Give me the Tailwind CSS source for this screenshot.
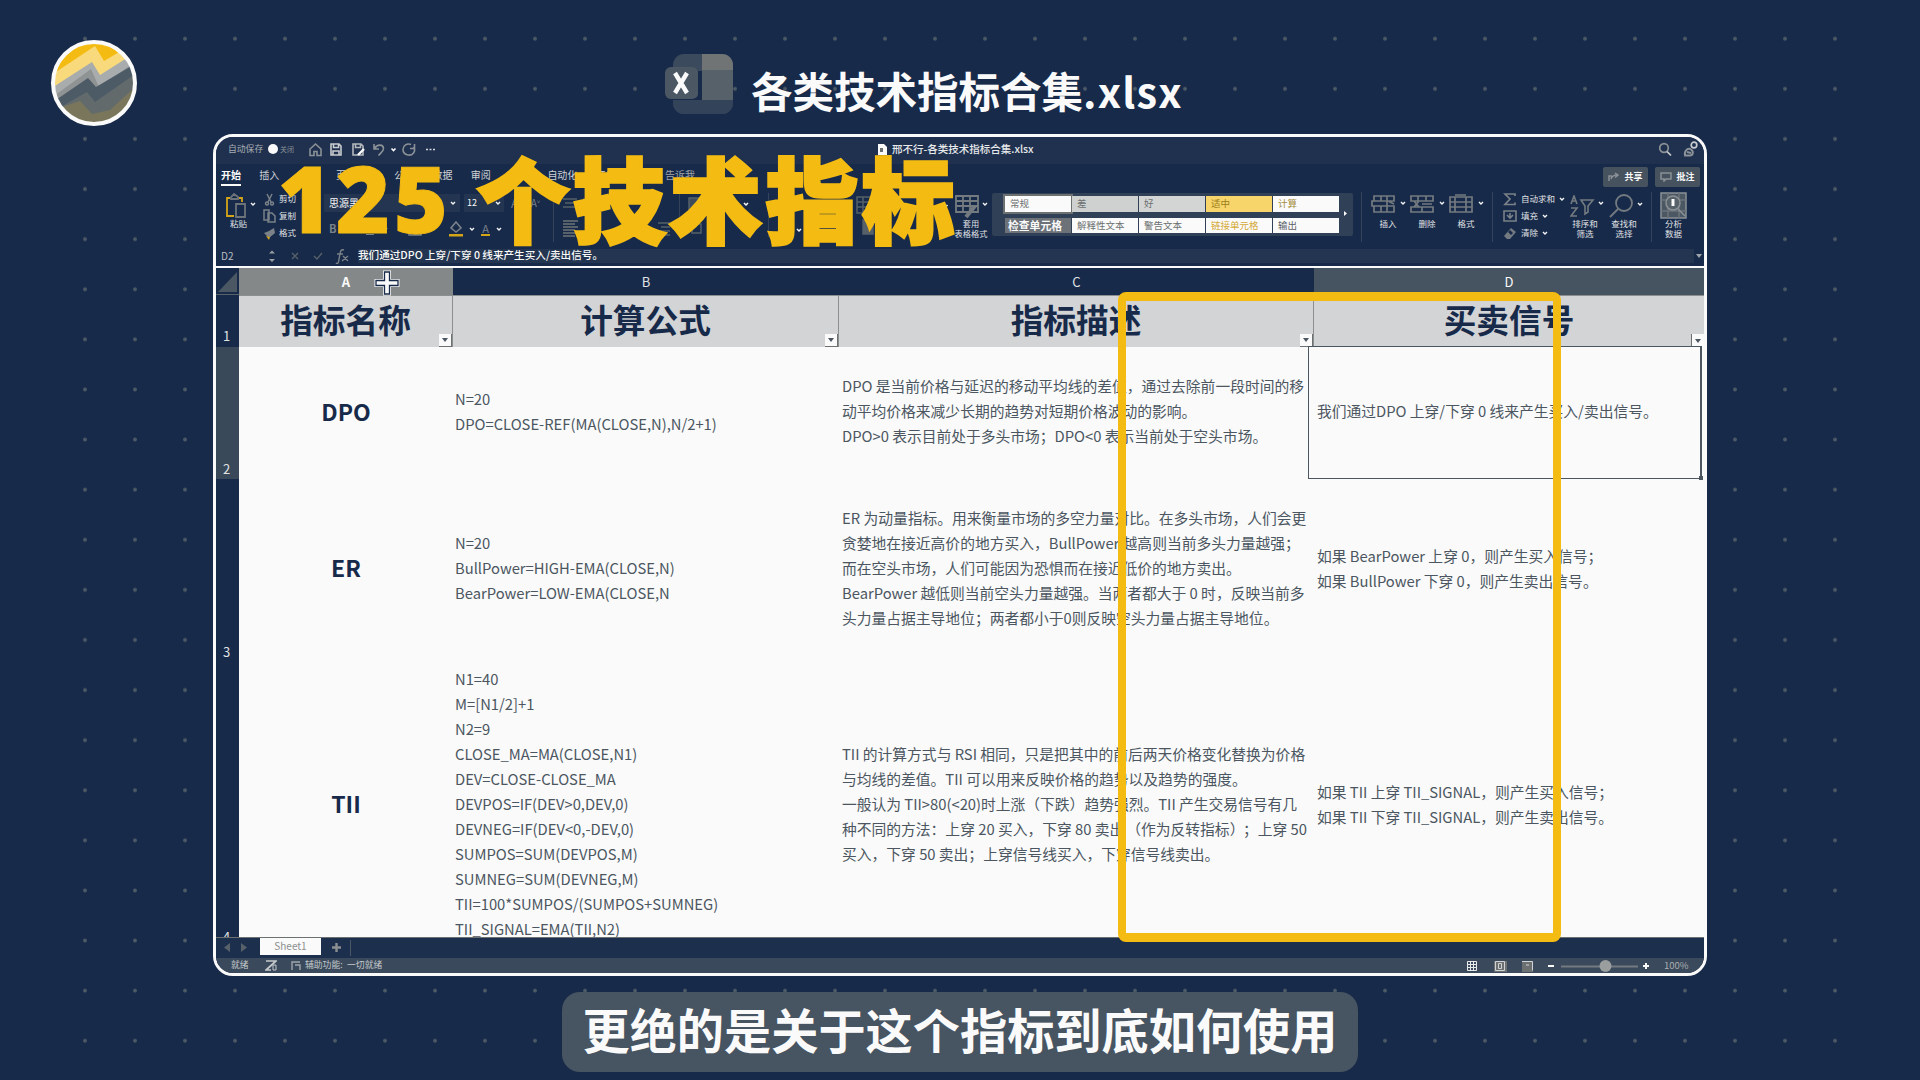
<!DOCTYPE html>
<html lang="zh-CN">
<head>
<meta charset="utf-8">
<title>各类技术指标合集.xlsx</title>
<script src="https://cdn.jsdelivr.net/npm/@tailwindcss/browser@4"></script>
</head>
<body class="bg-[#172a4a]">
<svg width="0" height="0" class="absolute">
  <defs>
    <symbol id="chev" viewBox="0 0 6 6"><path d="M1 2l2 2 2-2" fill="none" stroke="#f4f5f6" stroke-width="1.4"/></symbol>
    <pattern id="dots" x="60" y="13.7" width="50" height="50.1" patternUnits="userSpaceOnUse"><circle cx="25" cy="25" r="1.9" fill="#4d5a66"/></pattern>
  </defs>
</svg>
<main class="relative flex h-[1080px] w-[1920px] flex-col items-center overflow-hidden bg-[#172a4a] font-['Noto_Sans_CJK_SC',sans-serif] text-[#fafafa]">
  <svg class="absolute inset-0" width="1920" height="1080"><rect x="60" y="34" width="1800" height="1020" fill="url(#dots)"/></svg>

  <!-- channel logo -->
  <svg class="absolute left-[50px] top-[39px]" width="88" height="88" viewBox="0 0 88 88">
    <defs><clipPath id="disc"><circle cx="44" cy="44" r="40"/></clipPath></defs>
    <g clip-path="url(#disc)">
      <rect width="88" height="88" fill="#f4bb12"/>
      <path d="M0 37L45 7l9 15 34-20v86H0z" fill="#f8da7c"/>
      <path d="M0 50L42 23l8 13 38-24v76H0z" fill="#a9acac"/>
      <path d="M0 60L41 30l8 18 39-27v67H0z" fill="#8f9394"/>
      <path d="M0 65L38 39l8 9 42-25v65H0z" fill="#4d5b66"/>
      <path d="M0 74L37 53l8 10 43-30v55H0z" fill="#626a6c"/>
      <path d="M12 88V68l18-6 12 13 18-4 24-22v39z" fill="#8a7e50" opacity=".6"/>
    </g>
    <circle cx="44" cy="44" r="41" fill="none" stroke="#fafafa" stroke-width="4"/>
  </svg>

  <!-- file title -->
  <header class="relative flex h-[134px] w-full shrink-0 pl-[665px] pt-[54px]">
    <svg class="shrink-0" width="68" height="60" viewBox="0 0 68 60">
      <rect x="8" y="0" width="60" height="60" rx="11" fill="#3b4a5c"/>
      <path d="M37 0h20a11 11 0 0 1 11 11v5H37z" fill="#707475"/>
      <path d="M37 16h31v30H37z" fill="#566169"/>
      <path d="M8 46h60v3a11 11 0 0 1-11 11H19A11 11 0 0 1 8 49z" fill="#33435a"/>
      <path d="M33 17h4v29H8v-2h21a4 4 0 0 0 4-4z" fill="#172a4a"/>
      <rect x="0" y="13" width="33" height="32" rx="6" fill="#4b5864"/>
      <path d="M10 19l12 20M22 19L10 39" stroke="#fafafa" stroke-width="4.4"/>
    </svg>
    <h1 class="ml-[18px] mt-[6px] whitespace-nowrap text-[41.5px] font-bold leading-[60px]">各类技术指标合集<span class="tracking-[1.200px]">.xlsx</span></h1>
  </header>

  <!-- spreadsheet window -->
  <section class="relative flex h-[842px] w-[1494px] shrink-0 flex-col overflow-hidden rounded-[20px] border-[3px] border-[#fafafa] bg-[#172a4a]">
    <!-- title bar -->
    <div class="flex h-[27px] shrink-0 items-center bg-[#1f314f] pb-[3px] pl-[12px] text-[8.800px] leading-none text-[#a9adb2]">
      <span class="w-[40px] whitespace-nowrap">自动保存</span>
      <span class="flex h-[11px] w-[28px] items-center rounded-full"><i class="size-[10px] rounded-full bg-[#fafafa]"></i><b class="ml-[2px] whitespace-nowrap text-[7px] font-normal text-[#8b9196]">关闭</b></span>
      <svg class="ml-[10px]" width="140" height="18" viewBox="306 140 140 18" fill="none" stroke="#8b9196" stroke-width="1.6">
        <path d="M310 149l5.500-5 5.500 5v6.500h-4v-4h-3v4h-4z"/>
        <path d="M331 144h8l2 2v9h-10zM333.500 144v3.500h5V144M333 155v-4h6v4" stroke="#c9cccf"/>
        <path d="M353 144h8l2 2v9h-10zM355.500 144v3.500h5V144" stroke="#b4b8bc"/><path d="M358 155l6-6" stroke="#fafafa" stroke-width="2.400"/>
        <path d="M374 144v5h5M374.500 148.500c3-5 9-4 9 0 0 3-3 4.500-5 7"/>
        <path d="M391.500 148.500l2 2 2-2" stroke="#fafafa"/>
        <path d="M411 144.500c-4-1.500-8 1-8 5 0 5.500 7.500 7.500 10.500 3.500 1.500-2 1.500-4 0-6M410 148.500h4.500V144"/>
        <path d="M426 149.500h2m1.500 0h2m1.500 0h2" stroke="#d5d8da"/>
      </svg>
      <svg class="ml-[431px]" width="11" height="13" viewBox="0 0 11 13"><path d="M1 1h6l3 3v8H1z" fill="#fafafa"/><path d="M3 5h3v4H3z" fill="#6c7070"/></svg>
      <span class="ml-[4px] w-[150px] whitespace-nowrap text-[10.500px] font-medium text-[#e8eaec]">邢不行-各类技术指标合集.xlsx</span>
      <svg class="ml-auto mr-[5px]" width="42" height="18" viewBox="0 0 42 18" fill="none" stroke="#8b9196" stroke-width="1.700"><circle cx="7" cy="8" r="4.300"/><path d="M10 11.500l4 4" stroke="#c9cccf"/><circle cx="37" cy="5" r="2.800" stroke="#c9cccf"/><path d="M28 15.500c-1-5 3-8 6-6s2 6-1 6zM30 12l4 1" stroke-width="2"/></svg>
    </div>

    <!-- menu tabs -->
    <div class="flex h-[25px] shrink-0 items-center justify-between pl-[5px] pr-[4px] text-[10px] leading-none">
      <nav class="flex gap-[18.300px] whitespace-nowrap pb-[4px] text-[#d0d3d6]">
        <span class="relative font-bold text-[#fafafa]">开始<i class="absolute -bottom-[6px] left-0 h-[2px] w-full bg-[#fafafa]"></i></span>
        <span>插入</span><span>绘图</span><span>页面布局</span><span>公式</span><span>数据</span><span>审阅</span><span>视图</span><span>自动化</span><span>开发工具</span><span class="pl-[11px] text-[#a0a5aa]">告诉我</span>
      </nav>
      <div class="flex gap-[7px] text-[9px] font-bold">
        <span class="flex h-[20px] w-[45px] items-center justify-center gap-[4px] rounded-[2px] bg-[#46535f]"><svg width="12" height="10" viewBox="0 0 12 10" fill="none" stroke="#8b9196" stroke-width="1.500"><path d="M1 9V4h3M3 7c1-3 3-4 6-4M7 1l3 2-3 2.500"/></svg>共享</span>
        <span class="flex h-[20px] w-[45px] items-center justify-center gap-[4px] rounded-[2px] bg-[#46535f]"><svg width="12" height="10" viewBox="0 0 12 10" fill="none" stroke="#8b9196" stroke-width="1.500"><path d="M1 1h10v6H6L4 9V7H1z"/></svg>批注</span>
      </div>
    </div>

    <!-- ribbon -->
    <div class="flex h-[56px] shrink-0 text-[8.500px] leading-[9.500px] text-[#e0e2e5]">
      <div class="flex w-[43px] flex-col pl-[8px]">
        <div class="flex items-center gap-[2px]"><svg class="mt-[4px]" width="24" height="26" viewBox="0 0 24 26" fill="none" stroke-width="1.800"><path d="M6 5H3v18h7M15 5h3v4" stroke="#d4a517"/><path d="M7 6V4l3-3 4 3v2z" stroke="#6c7379"/><path d="M12 11h9v13h-9z" stroke="#6c7379"/></svg><svg width="6" height="6"><use href="#chev"/></svg></div>
        <span class="ml-[6px]">粘贴</span>
      </div>
      <div class="flex w-[60px] flex-col gap-[1px] pl-[4px] pt-[2px] [&>div]:flex [&>div]:h-[16px] [&>div]:items-center [&>div]:gap-[3px] [&>div]:whitespace-nowrap">
        <div><svg width="13" height="13" viewBox="0 0 13 13" fill="none" stroke="#7a8188" stroke-width="1.500"><path d="M4 1l4 8M9 1L5 9"/><circle cx="4" cy="10.500" r="1.500"/><circle cx="9" cy="10.500" r="1.500"/></svg>剪切</div>
        <div><svg width="13" height="14" viewBox="0 0 13 14" fill="none" stroke="#7a8188" stroke-width="1.500"><path d="M1 1h5v10H1zM5 4h4l3 3v6H5z"/></svg>复制</div>
        <div><svg width="13" height="13" viewBox="0 0 13 13"><path d="M6 4l5-3 1 5-6 5-5-5z" fill="#7a8188"/><path d="M3 9l4 1-1 3z" fill="#d4a517"/></svg>格式</div>
      </div>
      <div class="flex w-[234px] flex-col gap-[7px] pl-[5px] pt-[5px]">
        <div class="flex h-[18px] items-center">
          <span class="flex h-full w-[136px] items-center justify-between bg-[#233550] pl-[5px] pr-[4px] text-[10px] text-[#fafafa]">思源黑体<svg width="6" height="6"><use href="#chev"/></svg></span>
          <span class="ml-[4px] flex h-full w-[40px] items-center justify-between bg-[#233550] px-[3px] text-[9px] text-[#fafafa]">12<svg width="6" height="6"><use href="#chev"/></svg></span>
          <span class="ml-[7px] text-[12px] text-[#7a8188]">A<sup class="text-[6px]">^</sup></span><span class="ml-[9px] text-[10px] text-[#7a8188]">A<sup class="text-[6px]">˅</sup></span>
        </div>
        <div class="flex h-[20px] items-center text-[11px] text-[#7a8188]">
          <b class="w-[24px] pl-[5px]">B</b><i class="w-[18px]">I</i><u class="w-[16px]">U</u><svg width="6" height="6"><use href="#chev"/></svg>
          <svg class="ml-[20px]" width="14" height="14" viewBox="0 0 14 14" fill="none" stroke="#7a8188" stroke-width="1.500"><path d="M1 1h12v12H1zM7 1v12M1 7h12"/></svg><svg class="ml-[3px]" width="6" height="6"><use href="#chev"/></svg>
          <span class="ml-auto mr-[51px] flex items-center gap-[6px]"><svg width="14" height="16" viewBox="0 0 14 16"><path d="M7 1l5 6-5 4-5-4z" fill="none" stroke="#7a8188" stroke-width="1.600"/><path d="M0 13h14v2.500H0z" fill="#d4a517"/></svg><svg width="6" height="6"><use href="#chev"/></svg><span class="border-b-2 border-[#d4a517] px-[1px] leading-[12px]">A</span><svg width="6" height="6"><use href="#chev"/></svg></span>
        </div>
      </div>
      <div class="my-[3px] w-px bg-[#33435a]"></div>
      <!-- alignment, number and conditional-format controls -->
      <svg class="shrink-0" width="401" height="56" viewBox="554 188 401 56" fill="none" stroke="#566169" stroke-width="1.500">
        <path d="M563 198h14m-12 4h10m-12 4h14M583 198h14m-12 4h10m-12 4h14"/><path d="M563 220h15m-15 3h12m-12 3h15m-15 3h12m-12 3h15m-15 3h12" stroke-width="2"/><path d="M658 222h12m-9 4h9m-12 4h12M660 234h10"/>
        <path d="M679.500 192v44" stroke="#33435a" stroke-width="1"/><rect x="689" y="197" width="18" height="13" fill="#3d4c5c"/><rect x="692" y="223" width="9" height="9"/><path d="M768.500 192v44" stroke="#33435a" stroke-width="1"/>
        <rect x="857" y="196" width="16" height="16"/><path d="M857 201h16m-16 5h16m-10-10v16"/><rect x="863" y="219" width="10" height="14" fill="#566169"/>
        <path d="M744 202l2 2 2-2M797 228l2 2 2-2M943.500 204l2 2 2-2" stroke="#fafafa"/>
      </svg>
      <div class="flex w-[37px] flex-col items-start">
        <div class="flex items-center gap-[3px]"><svg class="mt-[6px]" width="24" height="24" viewBox="0 0 24 24" fill="none" stroke="#747b80" stroke-width="1.800"><path d="M1 1h22v16H1zM1 6h22M1 11h22M8 1v16M15 1v16"/><path d="M20 11l-9 11" stroke-width="4"/></svg><svg width="6" height="6"><use href="#chev"/></svg></div>
        <span class="-ml-[2px] w-[36px] text-center text-[8.200px] leading-[9.500px]">套用<br>表格格式</span>
      </div>
      <div class="relative mt-[4px] grid h-[43px] w-[361px] shrink-0 grid-cols-[repeat(5,65.500px)] grid-rows-2 gap-x-[1.500px] gap-y-[6px] rounded-[2px] bg-[#2f4057] py-[3px] pl-[13px] text-[9.500px] leading-[14px] text-[#6c7070] [&>span]:overflow-hidden [&>span]:whitespace-nowrap [&>span]:bg-[#fafafa] [&>span]:pl-[5px]">
        <span class="outline-2 outline-[#6c7070]">常规</span><span class="!bg-[#cfd1d1]">差</span><span class="!bg-[#d3d5d5]">好</span><span class="!bg-[#f7d56b] text-[#9c7d1a]">适中</span><span class="text-[#a58c3a]">计算</span>
        <span class="!bg-[#6c7278] !pl-[3px] font-bold !text-[#fafafa] text-[10.800px]">检查单元格</span><span>解释性文本</span><span>警告文本</span><span class="text-[#d4a935]">链接单元格</span><span class="text-[#5a6066]">输出</span>
        <svg class="absolute right-[5px] top-[18px]" width="5" height="5"><path d="M1 0l3 2.500-3 2.500z" fill="#fafafa"/></svg>
      </div>
      <div class="my-[3px] ml-[8px] w-px bg-[#33435a]"></div>
      <div class="flex pl-[9px] [&>div]:w-[39px]">
        <div><div class="flex items-center gap-[3px]"><svg class="mt-[5px]" width="26" height="22" viewBox="0 0 26 22" fill="none" stroke="#747b80" stroke-width="1.700"><path d="M3 2h20v5H3zM1 7h15v5H1zM3 12h20v6H3zM10 2v5m6-5v5M10 12v6m6-6v6M17 7l6 3"/></svg><svg width="6" height="6"><use href="#chev"/></svg></div><p class="mt-[3px] w-[34px] text-center">插入</p></div>
        <div><div class="flex items-center gap-[3px]"><svg class="mt-[5px]" width="26" height="22" viewBox="0 0 26 22" fill="none" stroke="#747b80" stroke-width="1.700"><path d="M1 2h22v5H1zM1 13h22v5H1zM4 7l5 6m0-6l-5 6M12 10h10M8 2v5m8-5v5M12 13v5"/></svg><svg width="6" height="6"><use href="#chev"/></svg></div><p class="mt-[3px] w-[34px] text-center">删除</p></div>
        <div><div class="flex items-center gap-[3px]"><svg class="mt-[5px]" width="26" height="22" viewBox="0 0 26 22" fill="none" stroke="#747b80" stroke-width="1.700"><path d="M1 3h22v15H1zM6 3v15M17 3v15M1 8h22M1 13h22M6 1h11"/></svg><svg width="6" height="6"><use href="#chev"/></svg></div><p class="mt-[3px] w-[34px] text-center">格式</p></div>
      </div>
      <div class="my-[3px] ml-[4px] w-px bg-[#33435a]"></div>
      <div class="flex w-[77px] flex-col gap-[1px] pl-[10px] pt-[2px] [&>div]:flex [&>div]:h-[16px] [&>div]:items-center [&>div]:gap-[4px] [&>div]:whitespace-nowrap">
        <div><svg width="14" height="13" viewBox="0 0 14 13" fill="none" stroke="#7a8188" stroke-width="1.700"><path d="M12 3V1H2l5 5-5 5.500h10v-2"/></svg>自动求和<svg width="6" height="6"><use href="#chev"/></svg></div>
        <div><svg width="14" height="12" viewBox="0 0 14 12" fill="none" stroke="#7a8188" stroke-width="1.600"><path d="M1 1h12v10H1zM4 5l3 3 3-3M7 3v5"/></svg>填充<svg width="6" height="6"><use href="#chev"/></svg></div>
        <div><svg width="14" height="13" viewBox="0 0 14 13"><path d="M8 1l5 4-6 7H4L1 9z" fill="#747b80"/><path d="M7 3l3 3-2 2-3-3z" fill="#172a4a"/></svg>清除<svg width="6" height="6"><use href="#chev"/></svg></div>
      </div>
      <div class="flex [&>div]:w-[39px]">
        <div><div class="flex items-center gap-[2px]"><svg class="mt-[6px]" width="26" height="22" viewBox="0 0 26 22" fill="none" stroke="#747b80" stroke-width="1.600"><path d="M1 9l3-8 3 8M2 6h4M1 13h6l-6 8h6M11 5h12l-5 6v6l-3 2v-8z"/></svg><svg width="6" height="6"><use href="#chev"/></svg></div><p class="mt-[2px] w-[30px] text-center">排序和筛选</p></div>
        <div><div class="flex items-center gap-[2px]"><svg class="mt-[5px]" width="26" height="24" viewBox="0 0 26 24" fill="none" stroke="#747b80" stroke-width="1.800"><circle cx="15" cy="9" r="8"/><path d="M9 15l-8 8"/></svg><svg width="6" height="6"><use href="#chev"/></svg></div><p class="mt-[1px] w-[30px] text-center">查找和选择</p></div>
      </div>
      <div class="my-[3px] ml-[3px] w-px bg-[#33435a]"></div>
      <div class="flex flex-col items-center pl-[8px] pt-[3px]">
        <svg width="27" height="27" viewBox="0 0 27 27" fill="none" stroke="#8b9196" stroke-width="1.500"><rect x="1" y="1" width="25" height="25" fill="#4b5864"/><path d="M1 8h25M1 19h25M8 1v25M19 1v25" stroke="#6c7379"/><circle cx="13" cy="11" r="7" fill="#566169"/><path d="M13 7v7" stroke="#fafafa" stroke-width="3"/><path d="M18 17l7 7"/></svg>
        <p class="w-[20px] text-center">分析数据</p>
      </div>
    </div>

    <!-- formula bar -->
    <div class="flex h-[22px] shrink-0 items-center pb-[1px] pl-[5px] text-[10.600px] leading-none">
      <span class="w-[46px] text-[10px] text-[#b9bdc1]">D2</span>
      <svg width="90" height="16" viewBox="267 248 90 16" fill="none" stroke="#7a8188" stroke-width="1.400"><path d="M269 253.500l3-3 3 3zM269 259l3 3 3-3z" fill="#9a9fa3" stroke="none"/><path d="M292 253l6 6m0-6l-6 6M314 256l3 3 5-6" stroke="#566169"/><path d="M344 250c-3-1-3.500 1-4 4l-1.500 8c-.5 1.500-1.500 2-2.500 1M337 254h6M343 256l5 5m0-5l-6 5"/></svg>
      <span class="ml-[1px] flex h-[14px] w-[1336px] items-center whitespace-nowrap bg-[#233550] font-medium">我们通过DPO 上穿/下穿 0 线来产生买入/卖出信号。</span>
      <svg class="ml-[2px]" width="6" height="6"><path d="M0 1h6L3 5z" fill="#a0a5aa"/></svg>
    </div>
    <div class="-mt-px h-[2px] shrink-0 bg-[#fafafa]"></div>

    <!-- sheet -->
    <div class="grid h-[669px] shrink-0 grid-cols-[23px_214px_386px_475px_390px] grid-rows-[27px_52px_132px_182px_276px] overflow-hidden bg-[#fafafa] text-[14.780px] leading-[25px] text-[#4b5661]">
      <div class="flex items-end justify-end border-b border-[#566169] bg-[#172a4a] p-[2px]"><svg width="19" height="20"><path d="M19 0v20H0z" fill="#4b5864"/></svg></div>
      <div class="flex items-center justify-center bg-[#848889] pb-[1px] text-[13px] font-bold text-[#fafafa]">A</div>
      <div class="flex items-center justify-center bg-[#172a4a] pb-[1px] text-[13px] text-[#e0e2e4]">B</div>
      <div class="flex items-center justify-center bg-[#172a4a] pb-[1px] text-[13px] text-[#e0e2e4]">C</div>
      <div class="flex items-center justify-center bg-[#465361] pb-[1px] text-[13px] text-[#fafafa]">D</div>

      <div class="flex items-end justify-center bg-[#172a4a] pr-[2px] text-[13px] leading-[23px] text-[#e0e2e4]">1</div>
      <div class="relative flex items-center justify-center border-r border-t border-[#8b8f90] bg-[#d3d4d5] pb-[7px] text-[32.700px] font-bold text-[#172a4a]">指标名称<i class="absolute bottom-0 right-0 flex size-[13px] items-center justify-center border-b border-r border-[#6c7070] bg-[#fafafa]"><svg width="6" height="4"><path d="M0 0h6L3 4z" fill="#4b5661"/></svg></i></div>
      <div class="relative flex items-center justify-center border-r border-t border-[#8b8f90] bg-[#d3d4d5] pb-[7px] text-[32.700px] font-bold text-[#172a4a]">计算公式<i class="absolute bottom-0 right-0 flex size-[13px] items-center justify-center border-b border-r border-[#6c7070] bg-[#fafafa]"><svg width="6" height="4"><path d="M0 0h6L3 4z" fill="#4b5661"/></svg></i></div>
      <div class="relative flex items-center justify-center border-r border-t border-[#8b8f90] bg-[#d3d4d5] pb-[7px] text-[32.700px] font-bold text-[#172a4a]">指标描述<i class="absolute bottom-0 right-0 flex size-[13px] items-center justify-center border-b border-r border-[#6c7070] bg-[#fafafa]"><svg width="6" height="4"><path d="M0 0h6L3 4z" fill="#4b5661"/></svg></i></div>
      <div class="relative flex items-center justify-center border-t border-[#8b8f90] bg-[#d3d4d5] pb-[7px] text-[32.700px] font-bold text-[#172a4a]">买卖信号<i class="absolute bottom-0 right-0 flex size-[13px] items-center justify-center border-l border-[#6c7070] bg-[#fafafa]"><svg width="6" height="4"><path d="M0 0h6L3 4z" fill="#4b5661"/></svg></i></div>

      <div class="flex items-end justify-center bg-[#3a4959] pr-[2px] text-[13px] leading-[20px] text-[#e0e2e4]">2</div>
      <div class="flex items-center justify-center pb-[4px] text-[23px] font-bold text-[#172a4a]">DPO</div>
      <div class="flex items-center pb-[4px] pl-[2px]"><p>N=20<br>DPO=CLOSE-REF(MA(CLOSE,N),N/2+1)</p></div>
      <div class="flex items-center whitespace-nowrap pb-[5px] pl-[3px]"><p>DPO 是当前价格与延迟的移动平均线的差值，通过去除前一段时间的移<br>动平均价格来减少长期的趋势对短期价格波动的影响。<br>DPO&gt;0 表示目前处于多头市场；DPO&lt;0 表示当前处于空头市场。</p></div>
      <div class="flex items-center whitespace-nowrap pb-[5px] pl-[3px]"><p>我们通过DPO 上穿/下穿 0 线来产生买入/卖出信号。</p></div>

      <div class="flex items-end justify-center bg-[#172a4a] pr-[2px] text-[13px] leading-[18px] text-[#e0e2e4]">3</div>
      <div class="flex items-center justify-center pb-[5px] text-[23px] font-bold text-[#172a4a]">ER</div>
      <div class="flex items-center pb-[5px] pl-[2px]"><p>N=20<br>BullPower=HIGH-EMA(CLOSE,N)<br>BearPower=LOW-EMA(CLOSE,N</p></div>
      <div class="flex items-center whitespace-nowrap pb-[5px] pl-[3px]"><p>ER 为动量指标。用来衡量市场的多空力量对比。在多头市场，人们会更<br>贪婪地在接近高价的地方买入，BullPower 越高则当前多头力量越强；<br>而在空头市场，人们可能因为恐惧而在接近低价的地方卖出。<br>BearPower 越低则当前空头力量越强。当两者都大于 0 时，反映当前多<br>头力量占据主导地位；两者都小于0则反映空头力量占据主导地位。</p></div>
      <div class="flex items-center whitespace-nowrap pb-[5px] pl-[3px]"><p>如果 BearPower 上穿 0，则产生买入信号；<br>如果 BullPower 下穿 0，则产生卖出信号。</p></div>

      <div class="flex items-end justify-center bg-[#172a4a] pr-[2px] text-[13px] leading-[0px] text-[#e0e2e4]">4</div>
      <div class="flex h-[285px] items-center justify-center text-[23px] font-bold text-[#172a4a]">TII</div>
      <div class="flex h-[285px] items-center pl-[2px]"><p>N1=40<br>M=[N1/2]+1<br>N2=9<br>CLOSE_MA=MA(CLOSE,N1)<br>DEV=CLOSE-CLOSE_MA<br>DEVPOS=IF(DEV&gt;0,DEV,0)<br>DEVNEG=IF(DEV&lt;0,-DEV,0)<br>SUMPOS=SUM(DEVPOS,M)<br>SUMNEG=SUM(DEVNEG,M)<br>TII=100*SUMPOS/(SUMPOS+SUMNEG)<br>TII_SIGNAL=EMA(TII,N2)</p></div>
      <div class="flex h-[285px] items-center whitespace-nowrap pl-[3px]"><p>TII 的计算方式与 RSI 相同，只是把其中的前后两天价格变化替换为价格<br>与均线的差值。TII 可以用来反映价格的趋势以及趋势的强度。<br>一般认为 TII&gt;80(&lt;20)时上涨（下跌）趋势强烈。TII 产生交易信号有几<br>种不同的方法：上穿 20 买入，下穿 80 卖出<span class="pl-[2px]">（作为反转指标）</span><span class="pl-[6px]">；上穿 50</span><br>买入，下穿 50 卖出；上穿信号线买入，下穿信号线卖出。</p></div>
      <div class="flex h-[285px] items-center whitespace-nowrap pl-[3px]"><p>如果 TII 上穿 TII_SIGNAL，则产生买入信号；<br>如果 TII 下穿 TII_SIGNAL，则产生卖出信号。</p></div>
    </div>

    <!-- sheet tabs -->
    <div class="flex h-[21px] shrink-0 border-t border-[#6c7070] bg-[#1c2f4d] text-[9px] leading-[15px]">
      <svg width="44" height="20" viewBox="216 937 44 20" fill="#566169"><path d="M230 942v9l-6-4.500zM241 942v9l6-4.500z"/></svg>
      <span class="h-[17px] w-[61px] bg-[#fafafa] text-center text-[10px] text-[#8b8f90]">Sheet1</span>
      <svg width="30" height="20" viewBox="0 0 30 20"><path d="M11 9.500h9M15.500 5v9" stroke="#8b8f90" stroke-width="2.400"/><path d="M29.500 2v16" stroke="#4b5864"/></svg>
    </div>
    <!-- status bar -->
    <div class="flex flex-1 items-center bg-[#3a495b] pl-[15px] text-[8.800px] leading-none text-[#c5c9cc]">
      <span class="w-[34px]">就绪</span>
      <svg width="12" height="11" viewBox="0 0 12 11" fill="none" stroke="#c5c9cc" stroke-width="1.700"><path d="M1 1h10L6 5.500 1 10h5"/><path d="M8 5h3v5H8z" stroke-width="1"/></svg>
      <svg class="ml-[13px]" width="12" height="11" viewBox="0 0 12 11" fill="none" stroke="#a0a5aa" stroke-width="1.400"><path d="M2 10V2h8M5 5h5v5"/></svg>
      <span class="ml-[3px] whitespace-nowrap">辅助功能:&ensp;一切就绪</span>
      <svg class="ml-auto" width="228" height="14" viewBox="1460 959 228 14" fill="none" stroke="#e8eaec" stroke-width="1">
        <path d="M1467.500 961.500h9v9h-9zM1470.500 961.500v9m3-9v9M1467.500 964.500h9m-9 3h9"/>
        <rect x="1494" y="961" width="13" height="11" fill="#6c7070" stroke="none"/><path d="M1495.500 961.500h9v9h-9zM1498.500 963.500h3v5h-3z" stroke="#d0d3d5"/>
        <rect x="1522" y="961" width="11" height="11" fill="#6c7070" stroke="none"/><path d="M1522 961.500h10.500v9M1526 965h3" stroke="#d0d3d5"/>
        <path d="M1548 966h6M1643 966h6M1646 963v6" stroke="#fafafa" stroke-width="2"/>
        <path d="M1561 966.500h77" stroke="#747b80" stroke-width="2"/><circle cx="1605.500" cy="966" r="6" fill="#9a9e9f" stroke="none"/>
      </svg>
      <span class="-ml-[24px] w-[40px] text-[9.500px] text-[#a9adb0]">100%</span>
    </div>

    <!-- active cell outline -->
    <div class="absolute left-[1092px] top-[209px] h-[133px] w-[394px] border border-r-2 border-[#4b5661]"><i class="absolute -bottom-[2px] -right-[3px] size-[4px] bg-[#4b5661]"></i></div>
  </section>

  <!-- subtitle -->
  <p class="relative mt-[16px] flex h-[80px] w-[796px] shrink-0 items-center justify-center whitespace-nowrap rounded-[18px] bg-[#475461] pb-[7px] text-[47.200px] font-bold leading-none">更绝的是关于这个指标到底如何使用</p>

  <!-- headline over the ribbon -->
  <p class="absolute left-[278px] top-[148px] flex items-baseline whitespace-nowrap text-[92px] font-black leading-[96px] text-[#f4bb12]"><span class="relative -top-[3px] w-[199px] font-['Open_Sans',sans-serif] text-[92px] font-extrabold leading-[90px] tracking-[4px] [-webkit-text-stroke:1px_#f4bb12]">125</span><span class="tracking-[4.300px] [-webkit-text-stroke:3.500px_#f4bb12]">个技术指标</span></p>
  <!-- highlight frame -->
  <div class="absolute left-[1118px] top-[292px] h-[650px] w-[443px] rounded-[8px] border-x-[8px] border-y-[9px] border-[#f4bb12]"></div>
  <!-- cell cursor -->
  <svg class="absolute left-[374px] top-[270px]" width="26" height="26" viewBox="0 0 26 26"><path d="M10.500 2h5v8.500H24v5h-8.500V24h-5v-8.500H2v-5h8.500z" fill="#fafafa" stroke="#fafafa" stroke-width="3"/><path d="M10.500 2h5v8.500H24v5h-8.500V24h-5v-8.500H2v-5h8.500z" fill="#fafafa" stroke="#172a4a" stroke-width="1.300"/></svg>
</main>
</body>
</html>
